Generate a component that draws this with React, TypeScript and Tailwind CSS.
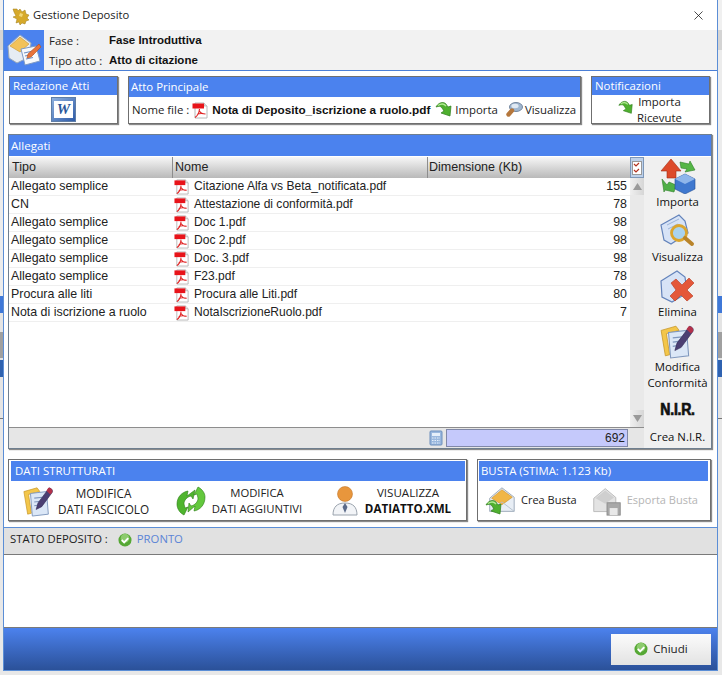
import React from 'react';
import { X } from 'lucide-react';

const ui = "font-['Open_Sans','Noto_Sans',sans-serif]";
const arial = "font-['Liberation_Sans',Arial,sans-serif]";

const PdfIcon = ({ size = 17 }: { size?: number }) => (
  <svg width={size} height={size} viewBox="0 0 17 17" className="shrink-0">
    <path d="M3 1h9l3 3v12H3z" fill="#fff" stroke="#b8b8b8" strokeWidth="1" />
    <path d="M12 1v3h3" fill="#e4e4e4" stroke="#aaa" strokeWidth="0.7" />
    <rect x="0.5" y="1.5" width="11.5" height="5" fill="#e8141a" />
    <path d="M3 15.5c3-2 4.2-5.5 4.5-8.5M7.5 9c1 2 3 3 6 3M5 12.5c2-1.2 5-1.2 8.5-.5" stroke="#e02020" strokeWidth="1.1" fill="none" />
  </svg>
);

const ArrowIcon = ({ size = 18 }: { size?: number }) => (
  <svg width={size} height={size} viewBox="0 0 18 18" className="shrink-0">
    <path d="M1 6c2-4 7-6 10-3l2 3 3-1-1 10-9-3 3-2-2-3C6 5 4 5 1 6z" fill="#4fb02f" stroke="#2f7d1c" strokeWidth="0.7" />
    <path d="M3 4.5c3-2 6-2 8 .5" stroke="#b2ea94" strokeWidth="1.3" fill="none" />
  </svg>
);

const CheckIcon = ({ size = 15 }: { size?: number }) => (
  <svg width={size} height={size} viewBox="0 0 15 15" className="shrink-0">
    <circle cx="7.5" cy="7.5" r="7" fill="#56a835" />
    <circle cx="7.5" cy="5.5" r="4.6" fill="#8ccb6d" />
    <path d="M4 7.5l2.6 2.6L11 5.4" stroke="#fff" strokeWidth="2" fill="none" />
  </svg>
);

const LensIcon = ({ size = 18 }: { size?: number }) => (
  <svg width={size} height={size} viewBox="0 0 18 18" className="shrink-0">
    <ellipse cx="11" cy="6" rx="6.5" ry="4.5" fill="#9fb6cf" stroke="#74879f" />
    <ellipse cx="10" cy="5" rx="3.6" ry="2.2" fill="#dfe9f3" />
    <path d="M7 9.5l-3.5 4" stroke="#b5773c" strokeWidth="4.4" strokeLinecap="round" />
  </svg>
);

const MailIcon = ({ size = 34 }: { size?: number }) => (
  <svg width={size} height={size} viewBox="0 0 34 34" className="shrink-0">
    <path d="M5 14L18 3l13 10v15H5z" fill="#e8eef5" stroke="#9aa8b8" />
    <path d="M7 14L18 5l11 8-11 8z" fill="#f0b646" stroke="#c98b1f" strokeWidth="0.6" />
    <path d="M5 28l13-10 13 10" fill="none" stroke="#b5c0cc" />
  </svg>
);

const HeaderIcon = () => (
  <svg width="36" height="36" viewBox="0 0 36 36" className="shrink-0">
    <path d="M2 14L14 3l11 8-2 14-12 6-8-5z" fill="#e6ecf4" stroke="#98a7ba" />
    <path d="M4 14L14 5l9 7-9 8z" fill="#f2c25a" stroke="#c9942a" strokeWidth="0.6" />
    <path d="M15 17l15-3 4 15-15 4z" fill="#f7f9fc" stroke="#7f9ac4" />
    <path d="M18 21l9-2M19 24l9-2M20 27l7-1.5" stroke="#6f8fc0" strokeWidth="1.2" />
    <path d="M33 12l2 3-10 10-4 1 1-4z" fill="#e8733a" stroke="#b04d1c" strokeWidth="0.6" />
  </svg>
);

const EditSheet = ({ size = 34 }: { size?: number }) => (
  <svg width={size} height={size} viewBox="0 0 34 34" className="shrink-0">
    <path d="M2 7l14-4 3 4-12 3 3 20-4 1z" fill="#f3c64a" stroke="#c59321" strokeWidth="0.7" />
    <path d="M9 9l17-2 2 24-17 2z" fill="#dbe7f7" stroke="#7f97bd" />
    <path d="M13 14l9-1M13 18l9-1M13 22l7-1" stroke="#7f97bd" strokeWidth="1.2" />
    <path d="M29 3c3 1 4 3 3 5L21 23l-6 3 2-7z" fill="#4b3f73" stroke="#2d2550" strokeWidth="0.6" />
    <path d="M28 3c3 0 5 2 4 5l-2 2-4-4z" fill="#b3314a" />
  </svg>
);

const Panel = ({ title, className, children, titleClass }: { title: string; className: string; children: React.ReactNode; titleClass: string }) => (
  <section className={`bg-white border border-[#6f6f6f] shadow-[1px_1px_1px_#8a8a8a] flex flex-col ${className}`}>
    <div className={`bg-[#4b82ee] text-white text-[11.4px] leading-none flex items-center shrink-0 ${titleClass}`}>{title}</div>
    {children}
  </section>
);

const rows = [
  ['Allegato semplice', 'Citazione Alfa vs Beta_notificata.pdf', '155'],
  ['CN', 'Attestazione di conformità.pdf', '78'],
  ['Allegato semplice', 'Doc 1.pdf', '98'],
  ['Allegato semplice', 'Doc 2.pdf', '98'],
  ['Allegato semplice', 'Doc. 3.pdf', '98'],
  ['Allegato semplice', 'F23.pdf', '78'],
  ['Procura alle liti', 'Procura alle Liti.pdf', '80'],
  ['Nota di iscrizione a ruolo', 'NotaIscrizioneRuolo.pdf', '7'],
];

const SideAction = ({ icon, label, className }: { icon: React.ReactNode; label: React.ReactNode; className: string }) => (
  <div className={`flex flex-col items-center ${className}`}>
    <div className="h-[36px] flex items-center justify-center">{icon}</div>
    <div className="text-[11.4px] leading-[16px] text-center text-[#111]">{label}</div>
  </div>
);

// the desktop behind the dialog, seen at both edges
const BackdropStrip = ({ className }: { className: string }) => (
  <div className={`flex flex-col shrink-0 ${className}`}>
    <div className="h-[30px] bg-[#f0f0f0]" />
    <div className="h-[20px] bg-[#d4d4d4]" />
    <div className="h-[246px] bg-[#ececec]" />
    <div className="h-[17px] bg-[#3f78d8]" />
    <div className="h-[19px] bg-[#e4e4e4]" />
    <div className="h-[26px] bg-[#a0a0a0]" />
    <div className="h-[2px] bg-[#e4e4e4]" />
    <div className="h-[17px] bg-[#2f62b0]" />
    <div className="h-[41px] bg-[#e4e4e4]" />
    <div className="h-px bg-[#777777]" />
  </div>
);

const App: React.FC = () => {
  return (
    <div className={`w-[722px] h-[675px] bg-[#e8e8e8] flex overflow-hidden ${ui}`}>
      <BackdropStrip className="w-[3px]" />
      <div className="w-[715px] h-[671px] bg-white border-x border-b border-[#5b8ed6] flex flex-col shrink-0">
        <header className="h-[30px] flex items-center pl-[7px] pr-[11px] shrink-0">
          <svg width="19" height="19" viewBox="0 0 19 19" className="shrink-0">
            <path d="M2 3h4l1 2 2-2 2 3 3-2 1 4 3 1-2 3 2 2-3 1-1 3-3-1-2 2-1-3-3 1 1-4-4-2 3-1-2-4z" fill="#d6a92a" stroke="#9c7a16" strokeWidth="0.5" />
            <path d="M9 7l3 1-1 3-3-1z" fill="#f2d776" />
          </svg>
          <span className="ml-[3px] text-[11.2px] text-[#222]">Gestione Deposito</span>
          <X size={15} strokeWidth={1.2} className="ml-auto text-[#111]" />
        </header>

        <div className="h-[41px] bg-[#f2f2f2] border-b border-[#4b7fd6] flex shrink-0">
          <div className="w-[40px] bg-[#4b82ee] flex items-center justify-center">
            <HeaderIcon />
          </div>
          <div className="flex flex-col justify-center pl-[5px] pt-[2px] gap-[3px]">
            <div className="flex items-center h-[17px]">
              <span className="w-[60px] text-[11.4px] text-[#222]">Fase :</span>
              <span className={`text-[11.5px] font-bold text-[#111] ${arial}`}>Fase Introduttiva</span>
            </div>
            <div className="flex items-center h-[17px]">
              <span className="w-[60px] text-[11.4px] text-[#222]">Tipo atto :</span>
              <span className={`text-[11.5px] font-bold text-[#111] ${arial}`}>Atto di citazione</span>
            </div>
          </div>
        </div>

        <div className="flex-1 flex flex-col pl-[4px] pr-[4px] min-h-0">
          <div className="flex gap-[10px] pt-[5px] pl-[1px] h-[53px] shrink-0">
            <Panel title="Redazione Atti" titleClass="h-[18px] pl-[3px]" className="w-[109px] h-[48px]">
              <div className="flex-1 flex justify-center items-center">
                <div className="w-[25px] h-[25px] bg-gradient-to-br from-[#8fb0de] to-[#2f5ca8] border border-[#5f7ea8] flex items-center justify-center">
                  <span className="bg-white w-[19px] h-[17px] flex items-center justify-center text-[#2b579a] text-[15px] font-bold italic leading-none font-['Liberation_Serif',serif]">W</span>
                </div>
              </div>
            </Panel>
            <Panel title="Atto Principale" titleClass="h-[20px] pl-[2px]" className="w-[453px] h-[48px]">
              <div className="flex-1 flex items-center pl-[3px] text-[11.4px] text-[#222] whitespace-nowrap">
                <span>Nome file :</span>
                <span className="ml-[3px]"><PdfIcon /></span>
                <span className={`ml-[3px] font-bold text-[11.75px] text-[#111] ${arial}`}>Nota di Deposito_iscrizione a ruolo.pdf</span>
                <span className="ml-[5px]"><ArrowIcon /></span>
                <span className="ml-[2px]">Importa</span>
                <span className="ml-[7px]"><LensIcon /></span>
                <span className="ml-[2px]">Visualizza</span>
              </div>
            </Panel>
            <Panel title="Notificazioni" titleClass="h-[18px] pl-[3px]" className="w-[119px] h-[48px]">
              <div className="flex-1 flex items-start overflow-hidden">
                <span className="ml-[26px] mt-[5px]"><ArrowIcon size={16} /></span>
                <span className="ml-[3px] mt-[-1px] text-[11.4px] leading-[16px] text-center text-[#222]">Importa<br />Ricevute</span>
              </div>
            </Panel>
          </div>

          <section className="mt-[10px] w-[704px] h-[315px] border border-[#6f7f8f] shadow-[1px_1px_1px_#8a8a8a] flex flex-col shrink-0 bg-white">
            <div className="h-[21px] bg-[#4b82ee] text-white text-[11.6px] flex items-center px-0.5 shrink-0">Allegati</div>
            <div className="flex-1 flex min-h-0 pt-px">
              <div className="w-[635px] flex flex-col">
                <div className="flex flex-1 min-h-0">
                  <div className={`flex-1 flex flex-col min-w-0 text-[12.4px] text-[#222] ${arial}`}>
                    <div className="h-[21px] flex bg-gradient-to-b from-[#f7f7f7] to-[#b9b9b9] text-[12.5px] text-[#222] shrink-0">
                      <div className="w-[164px] pl-[3px] border-r border-[#8d8d8d] flex items-center">Tipo</div>
                      <div className="w-[255px] pl-[2px] border-r border-[#8d8d8d] flex items-center">Nome</div>
                      <div className="flex-1 pl-[1px] flex items-center">Dimensione (Kb)</div>
                    </div>
                    {rows.map((row, i) => (
                      <div key={i} className="h-[18px] flex border-b border-[#efefef] shrink-0">
                        <div className="w-[164px] pl-[2px] flex items-center whitespace-nowrap">{row[0]}</div>
                        <div className="w-[255px] flex items-center whitespace-nowrap pl-px">
                          <PdfIcon size={16} />
                          <span className="ml-[4px] text-[12.05px]">{row[1]}</span>
                        </div>
                        <div className="flex-1 flex items-center justify-end pr-[3px]">{row[2]}</div>
                      </div>
                    ))}
                  </div>
                  <div className="w-[14px] flex flex-col bg-[#e9e9e9] shrink-0">
                    <div className="h-[21px] flex items-center justify-center bg-[#bcd0ea] border border-[#7d97b8]">
                      <svg width="10" height="14" viewBox="0 0 10 14">
                        <rect x="0.5" y="0.5" width="9" height="13" fill="#fff" stroke="#999" />
                        <path d="M2 3l2 2 3-3M2 9l2 2 3-3" stroke="#b3311f" strokeWidth="1.2" fill="none" />
                      </svg>
                    </div>
                    <div className="h-[17px] flex items-center justify-center bg-gradient-to-r from-[#f0f0f0] to-[#d6d6d6] text-[#9a9a9a]">
                      <svg width="9" height="7"><path d="M4.5 0L9 7H0z" fill="currentColor" /></svg>
                    </div>
                    <div className="flex-1" />
                    <div className="h-[17px] flex items-center justify-center bg-gradient-to-r from-[#f0f0f0] to-[#d6d6d6] text-[#9a9a9a]">
                      <svg width="9" height="7"><path d="M0 0h9L4.5 7z" fill="currentColor" /></svg>
                    </div>
                  </div>
                </div>
                <div className="h-[21px] bg-[#e6e6e6] border-t border-[#8d8d8d] flex items-center justify-end pr-[16px] shrink-0">
                  <svg width="14" height="16" viewBox="0 0 14 16" className="mr-[3px]">
                    <rect x="1" y="1" width="12" height="14" rx="1" fill="#9ab8de" stroke="#6c8fbd" />
                    <rect x="3" y="3" width="8" height="3" fill="#e5effa" />
                    <path d="M3 8h8M3 10.5h8M3 13h8" stroke="#e5effa" strokeDasharray="1.5 1" />
                  </svg>
                  <div className={`w-[182px] h-[18px] bg-[#c5c9fb] border border-[#8088a8] flex items-center justify-end pr-[2px] text-[12px] text-[#222] ${arial}`}>692</div>
                </div>
              </div>
              <div className="flex-1 bg-[#f0f0f0] flex flex-col items-center pt-[1px]">
                <SideAction className="h-[55px]" label="Importa" icon={
                  <svg width="36" height="36" viewBox="0 0 36 36">
                    <path d="M11 1l10 12h-5v7H7v-7H1z" fill="#dd4a2a" stroke="#a22d14" strokeWidth="0.6" />
                    <path d="M20 4l9 2 1-3 5 9-10 2 2-3-6-1z" fill="#54b646" stroke="#2e7d27" strokeWidth="0.6" />
                    <path d="M2 21l5 6 2-3 7 3-2 7-9-2-1 2z" fill="#4fb047" stroke="#2e7d27" strokeWidth="0.6" />
                    <path d="M15 21l10-5 10 5v10l-10 5-10-5z" fill="#3f78cf" stroke="#234f96" strokeWidth="0.6" />
                    <path d="M15 21l10 5 10-5-10-5z" fill="#8fb6ea" />
                  </svg>
                } />
                <SideAction className="h-[55px]" label="Visualizza" icon={
                  <svg width="36" height="36" viewBox="0 0 36 36">
                    <path d="M2 12l18-10 6 6 3 12-17 11-7-4z" fill="#d7e3f6" stroke="#6383bb" strokeWidth="1.2" />
                    <path d="M8 12l12-6M9 16l10-5" stroke="#9db4d8" />
                    <circle cx="20" cy="20" r="7.5" fill="#a9d3ef" stroke="#dba52e" strokeWidth="2.8" />
                    <path d="M26 25l7 6" stroke="#b9842a" strokeWidth="4" strokeLinecap="round" />
                  </svg>
                } />
                <SideAction className="h-[55px]" label="Elimina" icon={
                  <svg width="36" height="36" viewBox="0 0 36 36">
                    <path d="M2 13l16-10 8 6 2 16-15 9-10-5z" fill="#d7e3f6" stroke="#6383bb" strokeWidth="1.2" />
                    <path d="M12 15l5-4 6 6 7-7 5 5-7 7 6 6-6 5-6-6-6 6-5-5 6-6z" fill="#e4573a" stroke="#b5381c" strokeWidth="0.6" />
                  </svg>
                } />
                <SideAction className="h-[71px]" label={<>Modifica<br />Conformità</>} icon={<EditSheet size={36} />} />
                <div className="h-[24px] mt-[4px] flex items-center text-[#111] text-[16px] font-bold tracking-[-0.3px] [-webkit-text-stroke:0.7px_#111] font-['Liberation_Sans',sans-serif] scale-x-[0.88]">N.I.R.</div>
                <div className="text-[11.4px] leading-[16px] mt-[7px] text-[#111]">Crea N.I.R.</div>
              </div>
            </div>
          </section>

          <div className="flex gap-[10px] mt-[10px] h-[62px] shrink-0">
            <Panel title="DATI STRUTTURATI" titleClass="h-[20px] pl-[4px] ml-[2px] mr-[1px] mt-px" className="w-[459px] h-[62px]">
              <div className="flex-1 flex items-center pl-[13px] text-[11.75px] leading-[16px] text-[#222] whitespace-nowrap">
                <EditSheet size={32} />
                <div className="w-[101px] text-center ml-[-1px]">MODIFICA<br />DATI FASCICOLO</div>
                <svg width="32" height="32" viewBox="0 0 32 32" className="ml-[21px] shrink-0">
                  <path d="M2 19c0-7 5-12 11-13l-1 5 8-6-2 9-2-3c-4 1-7 4-7 8l1 4 3-1-4 8c-4-2-7-6-7-11z" fill="#4fb52e" stroke="#2c7c16" strokeWidth="0.6" />
                  <path d="M30 12c0 8-5 13-11 14l1-5-7 6 1-9 2 3c4-1 7-4 7-8l-1-4-3 1 4-8c4 2 7 6 7 10z" fill="#63c83d" stroke="#2c7c16" strokeWidth="0.6" />
                </svg>
                <div className="w-[100px] text-center text-[11.3px]">MODIFICA<br />DATI AGGIUNTIVI</div>
                <svg width="30" height="32" viewBox="0 0 30 32" className="ml-[23px] shrink-0">
                  <circle cx="15" cy="9" r="7.5" fill="#e8963c" stroke="#b86a1c" strokeWidth="0.5" />
                  <path d="M3 30c0-8 4-12 12-12s12 4 12 12z" fill="#f2f4f7" stroke="#9aa3ad" />
                  <path d="M15 18l-2.5 4 2.5 6 2.5-6z" fill="#5b6b8a" />
                </svg>
                <div className="ml-[3px] w-[90px] text-center text-[11.6px]">VISUALIZZA<br /><b className="text-[#111]">DATIATTO.XML</b></div>
              </div>
            </Panel>
            <Panel title="BUSTA (STIMA: 1.123 Kb)" titleClass="h-[20px] pl-[2px] ml-px mr-[2px] mt-px" className="w-[234px] h-[62px]">
              <div className="flex-1 flex items-center pl-[7px] text-[11px] whitespace-nowrap">
                <div className="relative w-[32px] h-[32px] shrink-0">
                  <MailIcon size={32} />
                  <div className="absolute left-0 bottom-0"><ArrowIcon size={18} /></div>
                </div>
                <span className="ml-[4px] text-[#222]">Crea Busta</span>
                <svg width="30" height="30" viewBox="0 0 34 34" className="ml-[15px] shrink-0">
                  <path d="M2 14L15 3l12 10v16H2z" fill="#e3e3e3" stroke="#b5b5b5" />
                  <path d="M4 14L15 5l10 8-10 7z" fill="#cfcfcf" />
                  <rect x="17" y="19" width="15" height="14" fill="#a8a8a8" stroke="#8a8a8a" />
                  <rect x="20" y="25" width="9" height="8" fill="#e8e8e8" />
                </svg>
                <span className="ml-[5px] text-[#b5b5b5]">Esporta Busta</span>
              </div>
            </Panel>
          </div>

          <div className="flex-1" />
        </div>

        <div className="h-[27px] bg-[#e1e1e1] border-t border-[#5b8ed6] flex items-center pl-[6px] pb-[3px] text-[11.3px] text-[#222] shrink-0">
          <span>STATO DEPOSITO :</span>
          <span className="ml-[10px]"><CheckIcon size={14} /></span>
          <span className="ml-[5px] text-[#5b84d6]">PRONTO</span>
        </div>
        <div className="h-[74px] bg-white border-y border-[#7a7a7a] shrink-0" />
        <footer className="h-[42px] bg-gradient-to-b from-[#4c82ee] to-[#2b5199] flex items-center justify-end pr-[6px] shrink-0">
          <button className="w-[100px] h-[31px] bg-gradient-to-b from-[#fbfbfb] to-[#e3e3e3] flex items-center justify-center gap-[5px] text-[11.6px] text-[#222]">
            <CheckIcon size={14} />
            Chiudi
          </button>
        </footer>
      </div>
      <BackdropStrip className="w-[4px]" />
    </div>
  );
};

export default App;
